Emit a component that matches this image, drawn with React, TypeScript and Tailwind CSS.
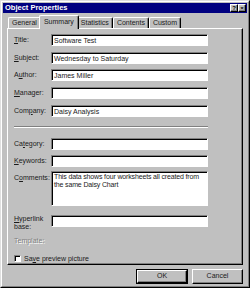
import type { ReactNode } from 'react'

const raised =
  'border border-t-white border-l-white border-r-black border-b-black shadow-[inset_-1px_-1px_0_#808080]'
const sunken =
  'bg-white border border-t-[#808080] border-l-[#808080] border-r-white border-b-white shadow-[inset_1px_1px_0_#000]'

function Acc({ text, at }: { text: string; at: number }) {
  return (
    <>
      {text.slice(0, at)}
      <span className="underline underline-offset-[1px]">{text[at]}</span>
      {text.slice(at + 1)}
    </>
  )
}

function Row({ label, value, className = '' }: { label: ReactNode; value?: string; className?: string }) {
  return (
    <div className={`flex items-center ${className}`}>
      <div className="w-[37px] shrink-0">{label}</div>
      <div className={`w-[157px] h-[12px] ${sunken} flex items-center pl-[2px] leading-none`}>{value}</div>
    </div>
  )
}

const tabs = ['General', 'Summary', 'Statistics', 'Contents', 'Custom']

export default function App() {
  return (
    <div
      className="w-[250px] h-[288px] bg-[#c0c0c0] flex flex-col border border-t-[#dfdfdf] border-l-[#dfdfdf] border-r-black border-b-black text-[7px] text-[#1a1a1a]"
      style={{ fontFamily: '"Liberation Sans", Arial, sans-serif' }}
    >
      <div className="flex flex-col flex-1 border border-t-white border-l-white border-r-[#808080] border-b-[#808080] p-[1px]">
        {/* title bar */}
        <div className="h-[10px] bg-[#000080] flex items-center justify-between pl-[2px] pr-[1px]">
          <span className="text-white font-bold text-[7.5px] leading-none">Object Properties</span>
          <div className="flex">
            <div className={`w-[8px] h-[8px] bg-[#c0c0c0] ${raised} flex items-center justify-center text-[6px] font-bold leading-none text-black`}>?</div>
            <div className={`w-[8px] h-[8px] bg-[#c0c0c0] ${raised} flex items-center justify-center text-[6px] font-bold leading-none text-black`}>×</div>
          </div>
        </div>

        {/* tabs */}
        <div className="flex items-end pl-[5px] mt-[3px] h-[12px]">
          {tabs.map((t) =>
            t === 'Summary' ? (
              <div
                key={t}
                className="relative z-10 -mb-px -mx-[2px] h-[14px] px-[4px] flex items-center bg-[#c0c0c0] border border-b-0 border-t-white border-l-white border-r-black rounded-t-[2px] shadow-[inset_-1px_0_0_#808080]"
              >
                {t}
              </div>
            ) : (
              <div
                key={t}
                className="h-[11px] px-[3px] flex items-center border border-b-0 border-t-white border-l-white border-r-black rounded-t-[2px] shadow-[inset_-1px_0_0_#808080]"
              >
                {t}
              </div>
            ),
          )}
        </div>

        {/* panel */}
        <div className="mx-[4px] h-[237px] border border-t-white border-l-white border-r-black border-b-black shadow-[inset_-1px_-1px_0_#808080] pl-[6px] pt-[5px] flex flex-col">
          <Row label={<><Acc text="Title" at={0} />:</>} value="Software Test" />
          <Row className="mt-[6px]" label={<><Acc text="Subject" at={0} />:</>} value="Wednesday to Saturday" />
          <Row className="mt-[5px]" label={<><Acc text="Author" at={1} />:</>} value="James Miller" />
          <Row className="mt-[6px]" label={<><Acc text="Manager" at={0} />:</>} />
          <Row className="mt-[6px]" label={<><Acc text="Company" at={3} />:</>} value="Daisy Analysis" />
          <div className="mt-[9px] w-[194px] border-t border-t-[#808080] border-b border-b-white" />
          <Row className="mt-[10px]" label={<><Acc text="Category" at={2} />:</>} />
          <Row className="mt-[5px]" label={<><Acc text="Keywords" at={0} />:</>} />
          <div className="flex mt-[4px]">
            <div className="w-[37px] shrink-0 pt-[2px]"><Acc text="Comments" at={1} />:</div>
            <div className={`w-[157px] h-[35px] ${sunken} pl-[2px] pr-0 pt-[1px] leading-[8px] tracking-[-0.15px]`}>
              This data shows four worksheets all created from the same Daisy Chart
            </div>
          </div>
          <div className="flex mt-[9px]">
            <div className="w-[37px] shrink-0 leading-[8px]">
              <Acc text="Hyperlink" at={0} />
              <br />
              base:
            </div>
            <div className={`w-[157px] h-[12px] ${sunken}`} />
          </div>
          <div className="mt-[6px] text-[#808080] [text-shadow:1px_1px_0_#fff] leading-none">Template:</div>
          <div className="mt-[11px] flex items-center gap-[3px]">
            <div className={`w-[7px] h-[7px] ${sunken}`} />
            <span className="leading-none">
              Sa<span className="underline underline-offset-[1px]">v</span>e preview picture
            </span>
          </div>
        </div>

        {/* buttons */}
        <div className="flex justify-end gap-[4px] pr-[4px] mt-[4px]">
          <div className="w-[52px] h-[15px] border border-black">
            <div className={`w-full h-full ${raised} flex items-center justify-center`}>OK</div>
          </div>
          <div className={`w-[51px] h-[15px] ${raised} flex items-center justify-center`}>Cancel</div>
        </div>
      </div>
    </div>
  )
}
